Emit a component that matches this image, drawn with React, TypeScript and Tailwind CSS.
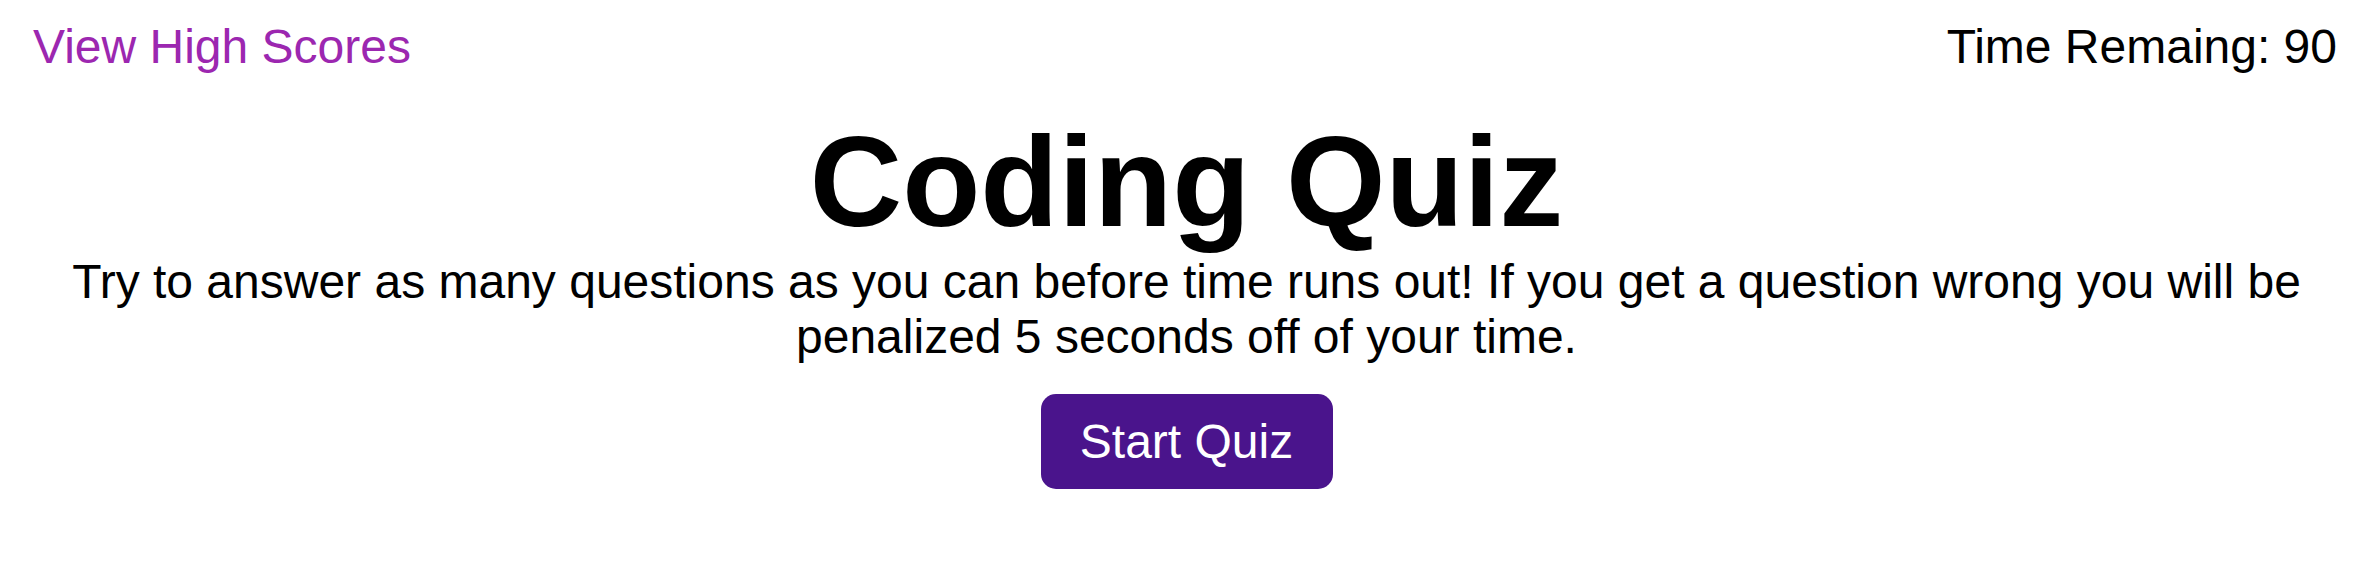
export default function App() {
  return (
    <div className="w-full h-[572px] bg-white text-black font-['Liberation_Sans',Arial,sans-serif]">
      <header className="flex justify-between items-start pt-[19px] pl-[33px] pr-[43px] text-[48px] leading-[55px]">
        <a href="#" className="text-[#9c27b0]">View High Scores</a>
        <span>Time Remaing: 90</span>
      </header>
      <main className="flex flex-col items-center text-center mt-[35px] pr-[7px]">
        <h1 className="text-[128px] font-bold leading-[145px]">Coding Quiz</h1>
        <p className="text-[48px] leading-[55px] px-[40px]">
          Try to answer as many questions as you can before time runs out! If you get a question wrong you will be penalized 5 seconds off of your time.
        </p>
        <button className="mt-[30px] h-[95px] w-[292px] rounded-[15px] bg-[#4a148c] text-white text-[48px] leading-none">
          Start Quiz
        </button>
      </main>
    </div>
  );
}
